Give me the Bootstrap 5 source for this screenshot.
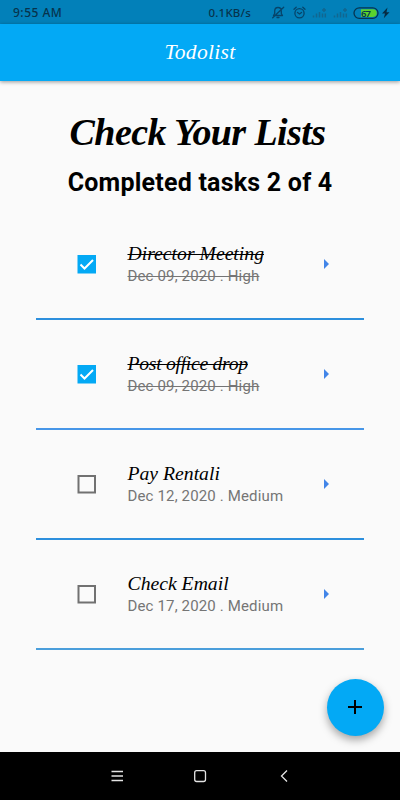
<!DOCTYPE html>
<html lang="en">
<head>
<meta charset="utf-8">
<meta name="viewport" content="width=device-width, initial-scale=1">
<title>Todolist</title>
<link href="https://cdn.jsdelivr.net/npm/bootstrap@5.3.0/dist/css/bootstrap.min.css" rel="stylesheet">
<style>
body{font-family:Roboto,sans-serif;background:#fafafa;color:#000;height:800px;overflow:hidden}
.serif{font-family:"Liberation Serif",serif;font-style:italic}
.status{height:24px;background:#0280b9;color:#07334c;font:500 12px/24px "Noto Sans",sans-serif;padding:1px 9px 0 13px}
.clock{letter-spacing:.5px}
.speed{font-size:11.5px;letter-spacing:.2px;margin-right:20px}
.appbar{height:57px;background:#03a9f5;color:#fff;box-shadow:0 1px 4px rgba(0,0,0,.4);font-size:21.5px;letter-spacing:.3px}
.headline{font-size:38px;font-weight:700;line-height:44px;letter-spacing:-.6px;padding-top:29px;padding-right:5px}
.summary{font-size:25px;font-weight:700;line-height:30px;letter-spacing:.22px;margin-top:14px}
.tasks{margin:12px 36px 0 36px}
.task{height:110px;border-bottom:2px solid #2d8fdd;padding:0 34px 0 41px}
.task:nth-child(2){border-color:#4796e8}
.task:nth-child(4){border-color:#4a9edb}
.box{width:19px;height:19px;margin-right:31.500px;flex:none}
.name{font-size:19.7px;line-height:22px}
.tight{letter-spacing:-.3px}
.meta{font-size:15px;line-height:22px;letter-spacing:.15px;color:#757575;position:relative;top:1px}
.done{text-decoration:line-through;text-decoration-thickness:1px}
.fab{width:57px;height:57px;right:16px;top:679px;background:#03a9f5;box-shadow:0 4px 8px rgba(0,0,0,.35)}
.fab svg{margin:0 1px 1px 0}
.keys{height:48px;background:#000}
</style>
<script src="https://cdn.jsdelivr.net/npm/bootstrap@5.3.0/dist/js/bootstrap.bundle.min.js"></script>
</head>
<body class="d-flex flex-column position-relative">
<div class="status d-flex align-items-center justify-content-between flex-shrink-0">
  <span class="clock">9:55 AM</span>
  <div class="d-flex align-items-center">
    <span class="speed">0.1KB/s</span>
    <svg width="120" height="16" viewBox="271 4.500 120 16" fill="none" stroke="#07446a" stroke-width="1.300" stroke-linecap="round" stroke-linejoin="round">
      <path d="M273.500 15h9l-1.200-2v-2.400c0-2.200-1.300-3.600-3.300-3.600s-3.300 1.400-3.300 3.600V13zM277 17h2M272.700 17.300l11-10.600"/>
      <circle cx="299.500" cy="12.800" r="4.600"/><path d="M297.500 12l2 1.500 2-1.500M294 8.700l2.200-2M305 8.700l-2.200-2"/>
      <g stroke="#126690" stroke-width="1.500" stroke-linecap="butt"><path d="M313.500 17v-2M316.500 17v-4M319.500 17v-5.500M322.500 17v-4M325.300 17v-4M322 9.500h4M324 7.500v4"/><path d="M334.500 17v-2M337.500 17v-4M340.500 17v-5.500M343.500 17v-4M346.300 17v-4M343 9.500h4M345 7.500v4"/></g>
      <rect x="354" y="7.300" width="24" height="10.600" rx="5.300" stroke="#073450"/>
      <path d="M361 8.800h12a3.800 3.800 0 0 1 0 7.600h-12z" fill="#5bd22c" stroke="none"/>
      <text x="361" y="16" font-family="Noto Sans,sans-serif" font-size="9.500" font-weight="600" fill="#073450" stroke="none" textLength="10">67</text>
      <path d="M387.500 7l-5.500 6h3l-1.200 4.700 5.700-6h-3z" fill="#062c43" stroke="none"/>
    </svg>
  </div>
</div>
<header class="appbar serif d-flex align-items-center justify-content-center flex-shrink-0">Todolist</header>
<main class="flex-grow-1">
  <h1 class="headline serif text-center m-0">Check Your Lists</h1>
  <h2 class="summary text-center mb-0">Completed tasks 2 of 4</h2>
  <div class="tasks">
    <div class="task d-flex align-items-center">
      <svg class="box" viewBox="0 0 19 19"><path fill="#03a9f5" d="M.5 0H19v18.500H.5z"/><path d="M3.500 9.500l4 4 8.500-8.500" fill="none" stroke="#fff" stroke-width="2"/></svg>
      <div class="flex-grow-1"><div class="name serif"><span class="done">Director Meeting</span></div><div class="meta"><span class="done">Dec 09, 2020 . High</span></div></div>
      <svg width="7" height="10" viewBox="0 0 7 10"><path fill="#4285e8" d="M1 0l5 5-5 5z"/></svg>
    </div>
    <div class="task d-flex align-items-center">
      <svg class="box" viewBox="0 0 19 19"><path fill="#03a9f5" d="M.5 0H19v18.500H.5z"/><path d="M3.500 9.500l4 4 8.500-8.500" fill="none" stroke="#fff" stroke-width="2"/></svg>
      <div class="flex-grow-1"><div class="name serif tight"><span class="done">Post office drop</span></div><div class="meta"><span class="done">Dec 09, 2020 . High</span></div></div>
      <svg width="7" height="10" viewBox="0 0 7 10"><path fill="#4285e8" d="M1 0l5 5-5 5z"/></svg>
    </div>
    <div class="task d-flex align-items-center">
      <svg class="box" viewBox="0 0 19 19"><path d="M1.500 1H18v16.500H1.500z" fill="none" stroke="#717171" stroke-width="2"/></svg>
      <div class="flex-grow-1"><div class="name serif">Pay Rentali</div><div class="meta">Dec 12, 2020 . Medium</div></div>
      <svg width="7" height="10" viewBox="0 0 7 10"><path fill="#4285e8" d="M1 0l5 5-5 5z"/></svg>
    </div>
    <div class="task d-flex align-items-center">
      <svg class="box" viewBox="0 0 19 19"><path d="M1.500 1H18v16.500H1.500z" fill="none" stroke="#717171" stroke-width="2"/></svg>
      <div class="flex-grow-1"><div class="name serif">Check Email</div><div class="meta">Dec 17, 2020 . Medium</div></div>
      <svg width="7" height="10" viewBox="0 0 7 10"><path fill="#4285e8" d="M1 0l5 5-5 5z"/></svg>
    </div>
  </div>
</main>
<button class="fab btn rounded-circle border-0 position-absolute p-0 d-flex align-items-center justify-content-center" aria-label="Add task">
  <svg width="14" height="14" viewBox="0 0 14 14"><path d="M7 0v14M0 7h14" stroke="#000" stroke-width="2"/></svg>
</button>
<nav class="keys flex-shrink-0">
  <svg class="d-block" width="400" height="48" viewBox="0 752 400 48" fill="none" stroke="#e4e4e4" stroke-width="1.300">
    <path d="M111.500 771.500h11.500M111.500 776h11.500M111.500 780.500h11.500"/>
    <rect x="194.700" y="770.700" width="10.800" height="10.800" rx="2"/>
    <path d="M287 770.500l-5.500 5.500 5.500 5.500"/>
  </svg>
</nav>
</body>
</html>
